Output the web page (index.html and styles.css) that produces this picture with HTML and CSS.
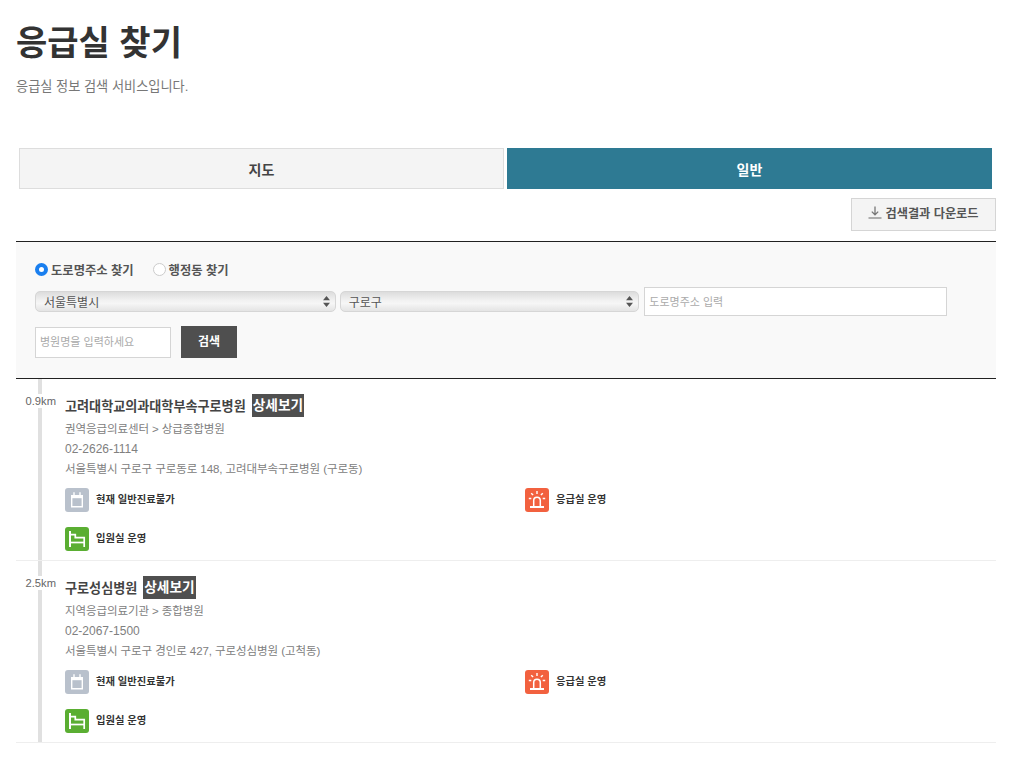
FILE: index.html
```html
<!DOCTYPE html>
<html lang="ko">
<head>
<meta charset="utf-8">
<title>응급실 찾기</title>
<link rel="stylesheet" href="styles.css">
</head>
<body>
<main class="page">
  <h1 class="title">응급실 찾기</h1>
  <p class="desc">응급실 정보 검색 서비스입니다.</p>
  <nav class="tabs">
    <a class="tab">지도</a>
    <a class="tab tab-on">일반</a>
  </nav>
  <div class="tools">
    <button class="dl">
      <svg class="dl-icon" width="14" height="13" viewBox="0 0 14 13"><path d="M7 0.5v8M3.8 5.6l3.2 3.2 3.2-3.2" fill="none" stroke="#777" stroke-width="1.3"/><path d="M0.5 12h13" stroke="#888" stroke-width="1.3"/></svg>
      검색결과 다운로드
    </button>
  </div>
  <section class="search">
    <div class="radios">
      <label class="radio"><span class="dot dot-on"></span>도로명주소 찾기</label>
      <label class="radio"><span class="dot"></span>행정동 찾기</label>
    </div>
    <div class="row-a">
      <div class="sel sel-a"><span>서울특별시</span><svg width="7" height="11" viewBox="0 0 7 11"><path d="M3.5 0L7 4.2H0zM3.5 11L0 6.8h7z" fill="#555"/></svg></div>
      <div class="sel sel-b"><span>구로구</span><svg width="7" height="11" viewBox="0 0 7 11"><path d="M3.5 0L7 4.2H0zM3.5 11L0 6.8h7z" fill="#555"/></svg></div>
      <input class="inp inp-road" placeholder="도로명주소 입력">
    </div>
    <div class="row-b">
      <input class="inp inp-name" placeholder="병원명을 입력하세요">
      <button class="go">검색</button>
    </div>
  </section>
  <ul class="list">
    <li class="item">
      <span class="km">0.9km</span>
      <div class="body">
        <h2 class="name">고려대학교의과대학부속구로병원 <a class="more">상세보기</a></h2>
        <p class="line">권역응급의료센터 &gt; 상급종합병원</p>
        <p class="line line-tel">02-2626-1114</p>
        <p class="line">서울특별시 구로구 구로동로 148, 고려대부속구로병원 (구로동)</p>
        <div class="stats">
          <div class="stat"><span class="ico ico-gray"><svg width="24" height="24" viewBox="0 0 24 24"><path d="M6.700 7.700h10.600v11h-10.600z" fill="none" stroke="#fff" stroke-width="1.400"/><path d="M6.700 10.200h10.600V7.700h-10.600z" fill="#fff"/><path d="M9 4.200v3.500M15 4.200v3.500" stroke="#fff" stroke-width="1.400"/></svg></span>현재 일반진료불가</div>
          <div class="stat"><span class="ico ico-red"><svg width="24" height="24" viewBox="0 0 24 24"><path d="M8.700 18.500v-6a3.300 3.300 0 0 1 6.600 0v6" fill="none" stroke="#fff" stroke-width="1.500"/><path d="M5 19h14" stroke="#fff" stroke-width="2"/><path d="M12 3v3M6.200 5.200l1.900 1.900M17.800 5.200l-1.900 1.900M3.800 10.500h2.500M17.700 10.500h2.500" stroke="#fff" stroke-width="1.400"/></svg></span>응급실 운영</div>
          <div class="stat"><span class="ico ico-green"><svg width="24" height="24" viewBox="0 0 24 24"><path d="M5 4v16" stroke="#fff" stroke-width="2"/><path d="M5 7.700h5.300v3H19.200v9.300" fill="none" stroke="#fff" stroke-width="1.700"/><path d="M5 15.500h14" stroke="#fff" stroke-width="1.700"/></svg></span>입원실 운영</div>
        </div>
      </div>
    </li>
    <li class="item">
      <span class="km">2.5km</span>
      <div class="body">
        <h2 class="name">구로성심병원 <a class="more">상세보기</a></h2>
        <p class="line">지역응급의료기관 &gt; 종합병원</p>
        <p class="line line-tel">02-2067-1500</p>
        <p class="line">서울특별시 구로구 경인로 427, 구로성심병원 (고척동)</p>
        <div class="stats">
          <div class="stat"><span class="ico ico-gray"><svg width="24" height="24" viewBox="0 0 24 24"><path d="M6.700 7.700h10.600v11h-10.600z" fill="none" stroke="#fff" stroke-width="1.400"/><path d="M6.700 10.200h10.600V7.700h-10.600z" fill="#fff"/><path d="M9 4.200v3.500M15 4.200v3.500" stroke="#fff" stroke-width="1.400"/></svg></span>현재 일반진료불가</div>
          <div class="stat"><span class="ico ico-red"><svg width="24" height="24" viewBox="0 0 24 24"><path d="M8.700 18.500v-6a3.300 3.300 0 0 1 6.600 0v6" fill="none" stroke="#fff" stroke-width="1.500"/><path d="M5 19h14" stroke="#fff" stroke-width="2"/><path d="M12 3v3M6.200 5.200l1.900 1.900M17.800 5.200l-1.900 1.900M3.800 10.500h2.500M17.700 10.500h2.500" stroke="#fff" stroke-width="1.400"/></svg></span>응급실 운영</div>
          <div class="stat"><span class="ico ico-green"><svg width="24" height="24" viewBox="0 0 24 24"><path d="M5 4v16" stroke="#fff" stroke-width="2"/><path d="M5 7.700h5.300v3H19.200v9.300" fill="none" stroke="#fff" stroke-width="1.700"/><path d="M5 15.500h14" stroke="#fff" stroke-width="1.700"/></svg></span>입원실 운영</div>
        </div>
      </div>
    </li>
  </ul>
</main>
</body>
</html>
```
FILE: styles.css
```css
* { box-sizing: border-box; }
html, body { margin: 0; padding: 0; background: #fff; }
body { font-family: "Liberation Sans", "Noto Sans CJK KR", sans-serif; color: #333; overflow: hidden; }
.page { width: 1013px; height: 770px; padding: 0 17px 0 16px; }
.title { margin: 0; padding-top: 17px; font-size: 34px; line-height: 48px; font-weight: 700; color: #333; font-family: "Noto Sans CJK KR", sans-serif; }
.desc { margin: 14px 0 0; font-size: 13.2px; line-height: 16px; color: #777; }
.tabs { display: flex; gap: 3px; margin: 53px 4px 0 3px; }
.tab { flex: 1; height: 41px; display: flex; align-items: center; justify-content: center; font-size: 14px; font-weight: 700; color: #444; background: #f4f4f4; border: 1px solid #ddd; }
.tab-on { background: #2e7a93; border-color: #2e7a93; color: #fff; }
.tools { display: flex; justify-content: flex-end; margin-top: 9px; }
.dl { width: 145px; height: 33px; display: flex; align-items: center; justify-content: center; gap: 3px; padding: 0 0 4px; font: 700 12.2px "Liberation Sans", "Noto Sans CJK KR", sans-serif; color: #555; background: #f4f4f4; border: 1px solid #d5d5d5; }
.search { margin-top: 10px; height: 138px; background: #f9f9f9; border-top: 1px solid #222; border-bottom: 1px solid #222; padding: 18px 49px 0 19px; }
.radios { display: flex; gap: 19px; height: 19px; }
.radio { display: flex; align-items: center; gap: 3px; font-size: 12.3px; font-weight: 700; color: #555; }
.dot { width: 13px; height: 13px; border-radius: 50%; background: #fff; border: 1px solid #ccc; }
.dot-on { border: 4px solid #1a7fef; }
.row-a { display: flex; align-items: center; gap: 4px; height: 29px; margin-top: 8px; }
.sel { height: 21px; display: flex; align-items: center; justify-content: space-between; padding: 0 5px 1px 8px; font-size: 12px; color: #555; border: 1px solid #d6d6d6; border-radius: 5px; background: linear-gradient(#dcdcdc, #f2f2f2 45%, #f6f6f6 60%, #e4e4e4); }
.sel-a { width: 301px; }
.sel-b { width: 300px; }
.inp { font: 11px "Liberation Sans", "Noto Sans CJK KR", sans-serif; background: #fff; border: 1px solid #d5d5d5; padding: 0 4px; outline: none; }
.inp::placeholder { color: #aaa; opacity: 1; }
.inp-road { width: 303px; height: 29px; margin-left: 1px; }
.row-b { display: flex; align-items: center; gap: 10px; margin-top: 10px; }
.inp-name { width: 136px; height: 31px; }
.go { width: 56px; height: 32px; padding: 0 0 4px; font: 700 12px "Liberation Sans", "Noto Sans CJK KR", sans-serif; color: #fff; background: #4f4f4f; border: 0; }
.list { margin: 0; padding: 0; list-style: none; }
.item { display: flex; height: 182px; border-bottom: 1px solid #eee; background: linear-gradient(#e0e0e0, #e0e0e0) 22px 0 / 4px 100% no-repeat; }
.km { align-self: flex-start; width: 31px; margin: 15px 0 0 9px; font-size: 11.2px; line-height: 14px; text-align: right; color: #666; background: #fff; white-space: nowrap; flex: none; height: 14px; }
.body { margin-left: 9px; padding-top: 14px; flex: 1; }
.name { margin: 0 0 2px; height: 24px; display: flex; align-items: center; gap: 6px; font-size: 13.1px; font-weight: 700; color: #444; }
.more { display: inline-block; height: 23px; line-height: 23px; padding: 0 1px; font-size: 13.7px; font-weight: 700; color: #fff; background: #4f4f4f; }
.line { margin: 0; font-size: 11.5px; line-height: 20px; color: #808080; letter-spacing: -0.08px; }
.line-tel { font-size: 12px; letter-spacing: 0; }
.stats { display: grid; grid-template-columns: 460px 1fr; row-gap: 15px; margin-top: 9px; }
.stat { display: flex; align-items: flex-start; gap: 7px; height: 24px; font-size: 10.3px; line-height: 23px; font-weight: 700; color: #333; }
.ico { width: 24px; height: 24px; border-radius: 3px; flex: none; display: block; }
.ico svg { display: block; }
.ico-gray { background: #b9c1cc; }
.ico-red { background: #f2613f; }
.ico-green { background: #5aae32; }
```
